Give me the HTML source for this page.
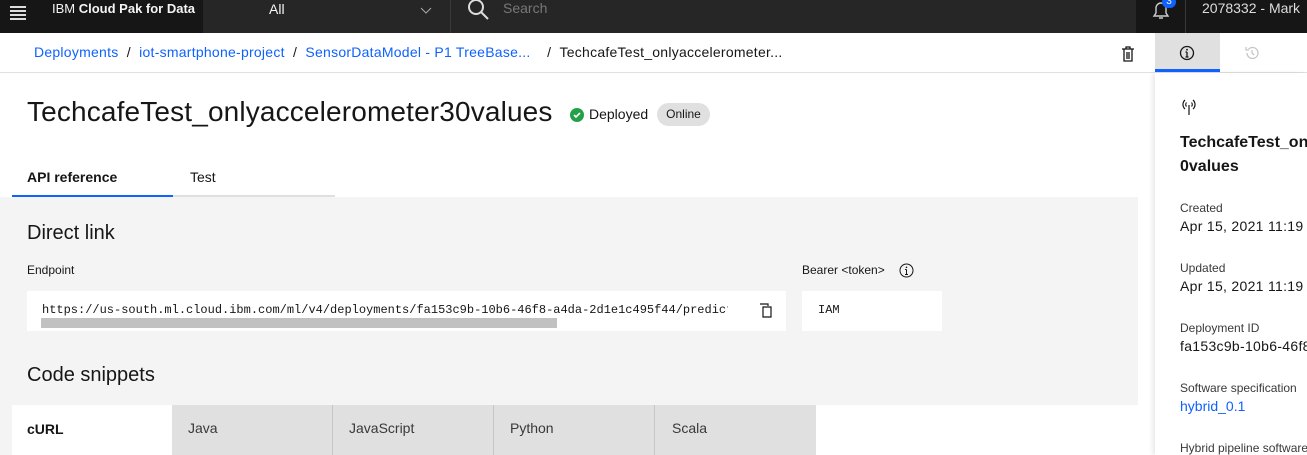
<!DOCTYPE html>
<html><head><style>
*{box-sizing:border-box;margin:0;padding:0}
body{width:1307px;height:455px;overflow:hidden;font-family:"Liberation Sans",sans-serif;background:#fff;position:relative;color:#161616}
.a{position:absolute}
.top{left:0;top:0;width:1307px;height:33px;background:#161616;color:#f4f4f4}
.mono{font-family:"Liberation Mono",monospace}
a{color:#0f62fe;text-decoration:none}
</style></head><body>
<div class="a top">
 <div class="a" style="left:10px;top:6px;width:16px">
  <div style="height:2px;background:#ddd;margin-bottom:2px"></div><div style="height:2px;background:#ddd;margin-bottom:2px"></div><div style="height:2px;background:#ddd;margin-bottom:2px"></div><div style="height:2px;background:#ddd"></div></div>
 <div class="a" style="left:52px;top:0;font-size:13px;line-height:17px;white-space:nowrap">IBM <b>Cloud Pak for Data</b></div>
 <div class="a" style="left:203px;top:0;width:248px;height:33px;background:#262626;border-right:1px solid #393939"></div>
 <div class="a" style="left:269px;top:1px;font-size:14px">All</div>
 <svg class="a" style="left:420px;top:5px" width="12" height="10"><path d="M1 3l5 5 5-5" stroke="#aaa" fill="none"/></svg>
 <div class="a" style="left:451px;top:0;width:685px;height:33px;background:#262626"></div>
 <svg class="a" style="left:466px;top:-2px" width="26" height="24"><circle cx="10" cy="9" r="7" stroke="#ddd" stroke-width="2" fill="none"/><path d="M15 14l7 7" stroke="#ddd" stroke-width="2"/></svg>
 <div class="a" style="left:503px;top:0;font-size:14px;color:#777">Search</div>
 <div class="a" style="left:1185px;top:0;width:1px;height:33px;background:#393939"></div>
 <svg class="a" style="left:1150px;top:0" width="24" height="20"><path d="M4 16h14l-2-3V8a5 5 0 0 0-10 0v5z M9 18h4" stroke="#ccc" fill="none" stroke-width="1.4"/></svg>
 <div class="a" style="left:1162px;top:-4px;width:14px;height:12px;border-radius:6px;background:#0f62fe;font-size:10px;text-align:center;line-height:12px">3</div>
 <div class="a" style="left:1202px;top:0;font-size:14px;color:#ddd;line-height:17px;white-space:nowrap">2078332 - Mark</div>
</div>
<div class="a" style="left:0;top:72px;width:1155px;height:1px;background:#e0e0e0"></div>
<div class="a" style="left:34px;top:44px;font-size:14px;white-space:nowrap;letter-spacing:0.25px"><a>Deployments</a>&nbsp; / &nbsp;<a>iot-smartphone-project</a>&nbsp; / &nbsp;<a>SensorDataModel - P1 TreeBase...</a>&nbsp;&nbsp;&nbsp; / &nbsp;TechcafeTest_onlyaccelerometer...</div>
<svg class="a" style="left:1121px;top:46px" width="14" height="16"><path d="M1 3h12M5 3V1h4v2M3 3v12h8V3M6 6v7M8 6v7" stroke="#161616" fill="none" stroke-width="1.3"/></svg>
<div class="a" style="left:1155px;top:33px;width:65px;height:39px;background:#e0e0e0;border-bottom:3px solid #0f62fe"></div>
<svg class="a" style="left:1179px;top:45px" width="16" height="16"><circle cx="8" cy="8" r="6.5" stroke="#161616" fill="none" stroke-width="1.3"/><path d="M8 7v5M6.5 12h3M6.5 7h1.5" stroke="#161616" stroke-width="1.3"/><circle cx="8" cy="4.7" r=".9" fill="#161616"/></svg>
<svg class="a" style="left:1244px;top:45px" width="16" height="16"><path d="M3 8a5.5 5.5 0 1 0 1.6-3.9M2 2v3h3M8 5v3l2 2" stroke="#c6c6c6" fill="none" stroke-width="1.3"/></svg>
<div class="a" style="left:1155px;top:72px;width:152px;height:1px;background:#e0e0e0"></div>
<div class="a" style="left:27px;top:96px;font-size:28px;white-space:nowrap;letter-spacing:0.15px">TechcafeTest_onlyaccelerometer30values</div>
<svg class="a" style="left:570px;top:108px" width="14" height="14"><circle cx="7" cy="7" r="7" fill="#24a148"/><path d="M4 7l2 2 4-4" stroke="#fff" stroke-width="1.6" fill="none"/></svg>
<div class="a" style="left:589px;top:106px;font-size:14px">Deployed</div>
<div class="a" style="left:657px;top:103px;width:53px;height:23px;border-radius:12px;background:#e0e0e0;font-size:12px;text-align:center;line-height:23px">Online</div>
<div class="a" style="left:12px;top:169px;width:161px;height:28px;border-bottom:2px solid #0f62fe;font-size:14px;font-weight:bold;padding-left:15px">API reference</div>
<div class="a" style="left:173px;top:169px;width:162px;height:28px;border-bottom:2px solid #e0e0e0;font-size:14px;padding-left:17px">Test</div>
<div class="a" style="left:0;top:197px;width:1138px;height:258px;background:#f4f4f4"></div>
<div class="a" style="left:27px;top:222px;font-size:20px">Direct link</div>
<div class="a" style="left:27px;top:263px;font-size:12px">Endpoint</div>
<div class="a" style="left:802px;top:263px;font-size:12px">Bearer &lt;token&gt;</div>
<svg class="a" style="left:899px;top:263px" width="15" height="15"><circle cx="7.5" cy="7.5" r="6.5" stroke="#161616" fill="none"/><path d="M7.5 6.5v5M6 11.5h3M6 6.5h1.5" stroke="#161616"/><circle cx="7.5" cy="4.3" r=".8" fill="#161616"/></svg>
<div class="a" style="left:27px;top:291px;width:759px;height:40px;background:#fff"></div>
<div class="a mono" style="left:42px;top:303px;font-size:12px;width:686px;overflow:hidden;white-space:nowrap">https://us-south.ml.cloud.ibm.com/ml/v4/deployments/fa153c9b-10b6-46f8-a4da-2d1e1c495f44/predictions</div>
<div class="a" style="left:41px;top:318px;width:516px;height:10px;background:#c1c1c1"></div>
<svg class="a" style="left:758px;top:302px" width="16" height="16"><path d="M2 2h8v2M5 5h8v10H5z" stroke="#161616" fill="none" stroke-width="1.2"/></svg>
<div class="a" style="left:802px;top:291px;width:140px;height:40px;background:#fff"></div>
<div class="a mono" style="left:818px;top:303px;font-size:12px">IAM</div>
<div class="a" style="left:27px;top:364px;font-size:20px">Code snippets</div>
<div class="a" style="left:12px;top:405px;width:1126px;height:50px;background:#fff"></div>
<div class="a" style="left:12px;top:405px;width:160px;height:50px;background:#fff;font-size:14px;font-weight:bold;padding:16px 15px">cURL</div>
<div class="a" style="left:172px;top:405px;width:644px;height:50px;background:#e0e0e0;font-size:14px;color:#393939">
 <span class="a" style="left:16px;top:15px">Java</span>
 <span class="a" style="left:160px;top:0;width:1px;height:50px;background:#c6c6c6"></span>
 <span class="a" style="left:177px;top:15px">JavaScript</span>
 <span class="a" style="left:321px;top:0;width:1px;height:50px;background:#c6c6c6"></span>
 <span class="a" style="left:338px;top:15px">Python</span>
 <span class="a" style="left:482px;top:0;width:1px;height:50px;background:#c6c6c6"></span>
 <span class="a" style="left:500px;top:15px">Scala</span>
</div>
<div class="a" style="left:1155px;top:73px;width:152px;height:382px;box-shadow:-3px 0 4px rgba(0,0,0,.08);overflow:hidden;background:#fff">
 <svg class="a" style="left:25px;top:24px" width="18" height="20"><path d="M9 8v10M5 3a6 6 0 0 0 0 9M13 3a6 6 0 0 1 0 9M6.5 5.5a3 3 0 0 0 0 4M11.5 5.5a3 3 0 0 1 0 4" stroke="#161616" fill="none" stroke-width="1.2"/></svg>
 <div class="a" style="left:25px;top:58px;font-size:16px;font-weight:bold;line-height:24px;white-space:nowrap">TechcafeTest_onlyaccelerometer3<br>0values</div>
 <div class="a" style="left:25px;top:128px;font-size:12px;color:#393939">Created</div>
 <div class="a" style="left:25px;top:145px;font-size:14px;white-space:nowrap;letter-spacing:0.3px">Apr 15, 2021 11:19 AM</div>
 <div class="a" style="left:25px;top:188px;font-size:12px;color:#393939">Updated</div>
 <div class="a" style="left:25px;top:205px;font-size:14px;white-space:nowrap;letter-spacing:0.3px">Apr 15, 2021 11:19 AM</div>
 <div class="a" style="left:25px;top:248px;font-size:12px;color:#393939">Deployment ID</div>
 <div class="a" style="left:25px;top:265px;font-size:14px;white-space:nowrap;letter-spacing:0.3px">fa153c9b-10b6-46f8</div>
 <div class="a" style="left:25px;top:308px;font-size:12px;color:#393939;white-space:nowrap">Software specification</div>
 <div class="a" style="left:25px;top:325px;font-size:14px;color:#0f62fe">hybrid_0.1</div>
 <div class="a" style="left:25px;top:368px;font-size:12px;color:#393939;white-space:nowrap">Hybrid pipeline software</div>
</div>
</body></html>
